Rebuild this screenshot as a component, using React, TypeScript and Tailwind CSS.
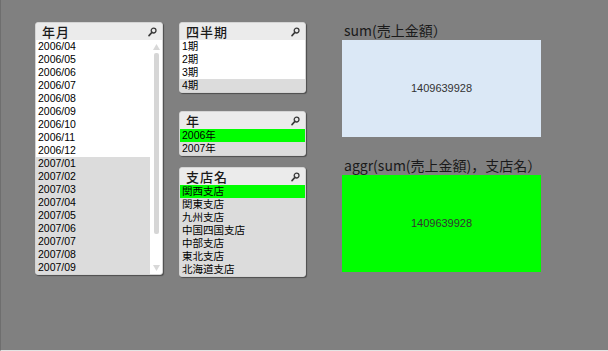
import React from "react";

const jp = { fontFamily: '"Liberation Sans", "Noto Sans CJK JP", sans-serif' };
const gothic = { fontFamily: '"Noto Sans CJK JP", sans-serif' };

type Row = { label: string; state: "on" | "off" | "sel" };

function SearchIcon() {
  return (
    <svg width="9" height="10" viewBox="0 0 9 10" className="shrink-0">
      <circle cx="5.6" cy="3.6" r="2.4" fill="none" stroke="#3a3a3a" strokeWidth="1.3" />
      <line x1="3.9" y1="5.4" x2="1" y2="8.6" stroke="#3a3a3a" strokeWidth="1.6" strokeLinecap="round" />
    </svg>
  );
}

function ListBox({ title, rows, scroll }: { title: string; rows: Row[]; scroll?: boolean }) {
  return (
    <div className="flex flex-col rounded-[3px] border border-[#d4d4d4] bg-[#e9e9e9] shadow-[1px_1px_1px_rgba(0,0,0,0.4)] overflow-hidden">
      <div className="flex h-[17px] items-center justify-between pl-[6px] pr-[5px] bg-[#ebebeb]">
        <span className="text-[13px] font-medium leading-none tracking-[1px] text-[#1a1a1a]" style={gothic}>
          {title}
        </span>
        <SearchIcon />
      </div>
      <div className="flex">
        <div className="flex flex-1 flex-col">
          {rows.map((r) => (
            <div
              key={r.label}
              className={
                "flex h-[13px] items-center pl-[2px] text-[10.5px] leading-none text-black " +
                (r.state === "sel" ? "bg-[#00ff00]" : r.state === "on" ? "bg-white" : "bg-[#dcdcdc]")
              }
              style={jp}
            >
              {r.label}
            </div>
          ))}
        </div>
        {scroll && (
          <div className="flex w-[12px] flex-col items-center bg-white pt-[4px] pb-[3px]">
            <svg width="7" height="6" viewBox="0 0 7 6">
              <polygon points="3.5,0 7,6 0,6" fill="#d8d8d8" />
            </svg>
            <div className="mt-[3px] h-[181px] w-[5px] rounded-[2px] bg-[#d6d6d6]" />
            <div className="flex-1" />
            <svg width="7" height="6" viewBox="0 0 7 6">
              <polygon points="0,0 7,0 3.5,6" fill="#d8d8d8" />
            </svg>
          </div>
        )}
      </div>
    </div>
  );
}

const months: Row[] = [
  "2006/04", "2006/05", "2006/06", "2006/07", "2006/08", "2006/09", "2006/10", "2006/11", "2006/12",
].map((l) => ({ label: l, state: "on" as const })).concat(
  ["2007/01", "2007/02", "2007/03", "2007/04", "2007/05", "2007/06", "2007/07", "2007/08", "2007/09"].map(
    (l) => ({ label: l, state: "off" as const })
  )
);

const quarters: Row[] = [
  { label: "1期", state: "on" },
  { label: "2期", state: "on" },
  { label: "3期", state: "on" },
  { label: "4期", state: "off" },
];

const years: Row[] = [
  { label: "2006年", state: "sel" },
  { label: "2007年", state: "off" },
];

const shops: Row[] = [
  { label: "関西支店", state: "sel" },
  { label: "関東支店", state: "off" },
  { label: "九州支店", state: "off" },
  { label: "中国四国支店", state: "off" },
  { label: "中部支店", state: "off" },
  { label: "東北支店", state: "off" },
  { label: "北海道支店", state: "off" },
];

function TextBox({ label, bg, h }: { label: string; bg: string; h: string }) {
  return (
    <div className="flex flex-col">
      <div className="h-[17px] pl-[2px] text-[14px] leading-[15px] text-[#1a1a1a]" style={gothic}>
        {label}
      </div>
      <div className={"flex items-center justify-center " + bg + " " + h}>
        <span className="text-[11px] text-[#333]" style={jp}>
          1409639928
        </span>
      </div>
    </div>
  );
}

export default function App() {
  return (
    <div className="relative h-[351px] w-[608px] overflow-hidden border-l border-l-[#6e6e6e] border-b border-b-[#e4e4e4] bg-[#808080]">
      <div className="flex pl-[34px] pt-[22px]">
        <div className="w-[128px]">
          <ListBox title="年月" rows={months} scroll />
        </div>
        <div className="ml-[16px] flex w-[127px] flex-col">
          <ListBox title="四半期" rows={quarters} />
          <div className="h-[18px]" />
          <ListBox title="年" rows={years} />
          <div className="h-[11px]" />
          <ListBox title="支店名" rows={shops} />
        </div>
        <div className="ml-[36px] flex w-[199px] flex-col pt-[1px]">
          <TextBox label="sum(売上金額）" bg="bg-[#dbe8f6]" h="h-[97px]" />
          <div className="h-[21px]" />
          <TextBox label="aggr(sum(売上金額)，支店名）" bg="bg-[#00ff00]" h="h-[97px]" />
        </div>
      </div>
    </div>
  );
}
